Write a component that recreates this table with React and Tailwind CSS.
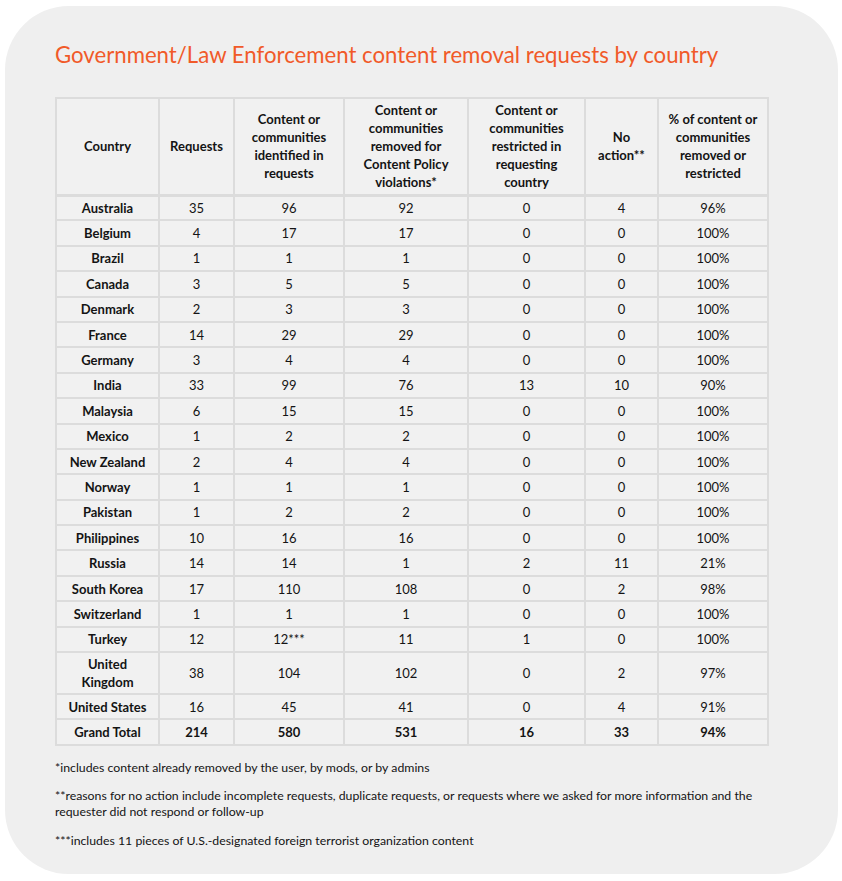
import React from "react";

const rows = [
  ["Australia", "35", "96", "92", "0", "4", "96%"],
  ["Belgium", "4", "17", "17", "0", "0", "100%"],
  ["Brazil", "1", "1", "1", "0", "0", "100%"],
  ["Canada", "3", "5", "5", "0", "0", "100%"],
  ["Denmark", "2", "3", "3", "0", "0", "100%"],
  ["France", "14", "29", "29", "0", "0", "100%"],
  ["Germany", "3", "4", "4", "0", "0", "100%"],
  ["India", "33", "99", "76", "13", "10", "90%"],
  ["Malaysia", "6", "15", "15", "0", "0", "100%"],
  ["Mexico", "1", "2", "2", "0", "0", "100%"],
  ["New Zealand", "2", "4", "4", "0", "0", "100%"],
  ["Norway", "1", "1", "1", "0", "0", "100%"],
  ["Pakistan", "1", "2", "2", "0", "0", "100%"],
  ["Philippines", "10", "16", "16", "0", "0", "100%"],
  ["Russia", "14", "14", "1", "2", "11", "21%"],
  ["South Korea", "17", "110", "108", "0", "2", "98%"],
  ["Switzerland", "1", "1", "1", "0", "0", "100%"],
  ["Turkey", "12", "12***", "11", "1", "0", "100%"],
  ["United Kingdom", "38", "104", "102", "0", "2", "97%"],
  ["United States", "16", "45", "41", "0", "4", "91%"],
];

const widths = ["w-[103px]", "w-[75px]", "w-[110px]", "w-[124px]", "w-[117px]", "w-[73px]", "w-[110px]"];

const headers = [
  "Country",
  "Requests",
  "Content or communities identified in requests",
  "Content or communities removed for Content Policy violations*",
  "Content or communities restricted in requesting country",
  "No action**",
  "% of content or communities removed or restricted",
];

export default function App() {
  return (
    <div className="w-[842px] h-[881px] bg-white pt-[6px] pl-[5px]" style={{ fontFamily: "Lato, 'Noto Sans', sans-serif" }}>
      <div className="w-[833px] h-[868px] bg-[#efefef] rounded-[64px] pl-[50px] pt-[34px] text-[#141414]">
        <h1 className="text-[22.2px] leading-[30px] text-[#f15a29]">
          Government/Law Enforcement content removal requests by country
        </h1>
        <table className="mt-[27px] table-fixed border-collapse w-[712px] text-[13px] text-center">
          <thead>
            <tr>
              {headers.map((h, i) => (
                <th key={i} className={`${widths[i]} h-[97px] border-2 border-b-[3px] border-[#dcdcdc] bg-[#f1f1f1] font-bold leading-[18px] px-[8px]`}>
                  {h}
                </th>
              ))}
            </tr>
          </thead>
          <tbody>
            {rows.map((r, ri) => (
              <tr key={ri}>
                {r.map((c, ci) => (
                  <td
                    key={ci}
                    className={`${r[0] === "United Kingdom" ? "h-[42px]" : "h-[25.4px]"} border-2 border-[#dcdcdc] bg-[#f1f1f1] leading-[18px] ${ci === 0 ? "font-bold px-[10px]" : ""}`}
                  >
                    {c}
                  </td>
                ))}
              </tr>
            ))}
            <tr>
              {["Grand Total", "214", "580", "531", "16", "33", "94%"].map((c, ci) => (
                <td key={ci} className="h-[26px] border-2 border-[#dcdcdc] bg-[#f1f1f1] font-bold leading-[18px]">
                  {c}
                </td>
              ))}
            </tr>
          </tbody>
        </table>
        <div className="mt-[14px] text-[12.3px] leading-[16px] pr-[60px]">
          <p>*includes content already removed by the user, by mods, or by admins</p>
          <p className="mt-[12px]">
            **reasons for no action include incomplete requests, duplicate requests, or requests where we asked for more information and the requester did not respond or follow-up
          </p>
          <p className="mt-[13px]">***includes 11 pieces of U.S.-designated foreign terrorist organization content</p>
        </div>
      </div>
    </div>
  );
}
